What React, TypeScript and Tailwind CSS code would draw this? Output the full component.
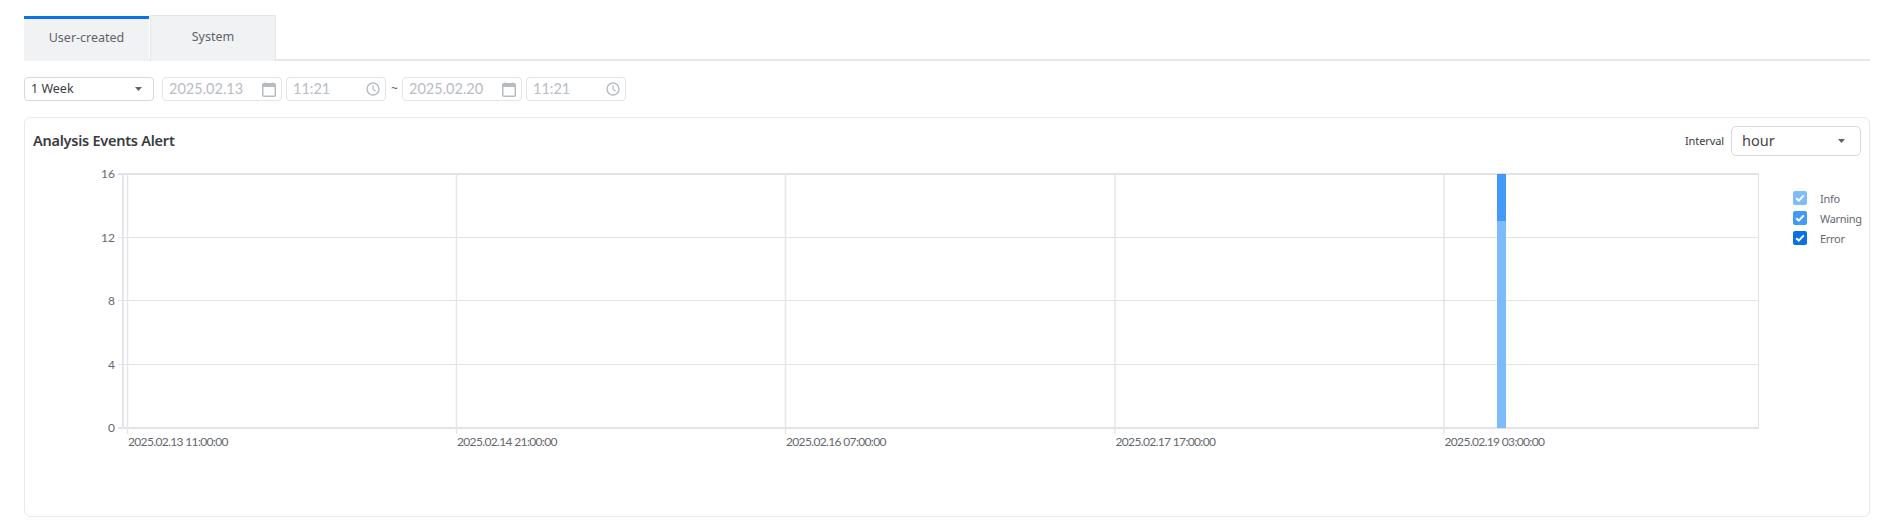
const sans = { fontFamily: '"Noto Sans", sans-serif' };

function Caret() {
  return (
    <svg width="7" height="4" viewBox="0 0 7 4" className="shrink-0">
      <path d="M0 0h7L3.5 4z" fill="#5f6268" />
    </svg>
  );
}

function CalendarIcon() {
  return (
    <svg width="14" height="15" viewBox="0 0 14 15" fill="none" className="shrink-0">
      <rect x="0.75" y="1.75" width="12.5" height="12.5" rx="1" stroke="#b7bbc2" strokeWidth="1.5" />
      <rect x="1" y="2" width="12" height="3" fill="#b7bbc2" />
      <path d="M3.5 0.5v2M10.5 0.5v2" stroke="#b7bbc2" strokeWidth="1.5" />
    </svg>
  );
}

function ClockIcon() {
  return (
    <svg width="14" height="14" viewBox="0 0 14 14" fill="none" className="shrink-0">
      <circle cx="7" cy="7" r="6" stroke="#b7bbc2" strokeWidth="1.4" />
      <path d="M7 3.2V7l2.6 2.2" stroke="#b7bbc2" strokeWidth="1.2" />
    </svg>
  );
}

function PickerField({ value, kind }: { value: string; kind: 'date' | 'time' }) {
  return (
    <div
      className={`flex h-[24px] items-center justify-between rounded-[4px] border border-[#e3e4e8] pl-[6px] pr-[5px] text-[14.5px] text-[#b9bcc3] ${
        kind === 'date' ? 'w-[120px]' : 'w-[100px]'
      }`}
      style={{ fontFamily: 'Lato, sans-serif' }}
    >
      <span>{value}</span>
      {kind === 'date' ? <CalendarIcon /> : <ClockIcon />}
    </div>
  );
}

function LegendItem({ label, color }: { label: string; color: string }) {
  return (
    <div className="flex h-[14px] items-center gap-[13px]">
      <span className={`flex h-[14px] w-[14px] items-center justify-center rounded-[2px] ${color}`}>
        <svg width="10" height="8" viewBox="0 0 10 8" fill="none">
          <path d="M1.2 4.2 3.8 6.6 8.8 1.4" stroke="#fff" strokeWidth="2" />
        </svg>
      </span>
      <span className="text-[11px] leading-none tracking-[-0.3px] text-[#66686e]">{label}</span>
    </div>
  );
}

const verticals = [127.5, 456.5, 785.5, 1115, 1444];
const horizontals = [
  { y: 174, label: '16' },
  { y: 237.5, label: '12' },
  { y: 300.5, label: '8' },
  { y: 364.5, label: '4' },
  { y: 428, label: '0' },
];
const xLabels = ['2025.02.13 11:00:00', '2025.02.14 21:00:00', '2025.02.16 07:00:00', '2025.02.17 17:00:00', '2025.02.19 03:00:00'];

function AlertChart() {
  // coordinates are the page's, the svg sits at the card's left/top offset
  return (
    <svg width="1740" height="290" viewBox="25 165 1740 290" className="block">
      {horizontals.map((h) => (
        <g key={h.label}>
          <line x1="118" x2="1759" y1={h.y} y2={h.y} stroke="#e2e2e7" strokeWidth={h.label === '16' || h.label === '0' ? 2 : 1} />
          <text x="115" y={h.y + 4} textAnchor="end" fontSize="12" fill="#66686e" fontFamily="Lato, sans-serif">
            {h.label}
          </text>
        </g>
      ))}
      <line x1="123" x2="123" y1="174" y2="429" stroke="#e4e4e9" strokeWidth="2" />
      <line x1="1758.5" x2="1758.5" y1="174" y2="429" stroke="#e2e2e6" strokeWidth="1" />
      {verticals.map((x, i) => (
        <g key={x}>
          <line x1={x} x2={x} y1="174" y2="434" stroke="#e6e6ea" strokeWidth="1.5" />
          <text x={x + 0.5} y="446" fontSize="12" letterSpacing="-0.65" fill="#66686e" fontFamily="Lato, sans-serif">
            {xLabels[i]}
          </text>
        </g>
      ))}
      <rect x="1497" y="221" width="9" height="207" fill="#7dbcfb" />
      <rect x="1497" y="174" width="9" height="47" fill="#4299f7" />
    </svg>
  );
}

export default function App() {
  return (
    <div className="h-[524px] bg-white pl-[24px] pr-[29px] pt-[15px]" style={sans}>
      {/* Tabs */}
      <div className="flex h-[46px] border-b-2 border-[#e6e7eb]">
        <div className="-mb-[2px] mt-px flex h-[45px] w-[125px] items-center justify-center border-t-[3px] border-[#0b73ea] bg-[#f1f2f4] pb-[3px] text-[12.5px] text-[#5f6268]">
          User-created
        </div>
        <div className="-mb-[2px] ml-px flex h-[46px] w-[126px] items-center justify-center border-l border-r border-t border-[#e6e7eb] bg-[#f1f2f4] pb-[2px] text-[12.5px] text-[#5f6268]">
          System
        </div>
      </div>

      {/* Period filter */}
      <div className="mt-[16px] flex items-center">
        <div className="flex h-[24px] w-[130px] items-center justify-between rounded-[4px] border border-[#d8d9de] pl-[6px] pr-[11px] text-[12.5px] text-[#3c3d42]">
          <span>1 Week</span>
          <Caret />
        </div>
        <div className="ml-[8px]"><PickerField value="2025.02.13" kind="date" /></div>
        <div className="ml-[4px]"><PickerField value="11:21" kind="time" /></div>
        <span className="ml-[5px] mr-[4px] w-[7px] text-[12px] text-[#5f6268]">~</span>
        <PickerField value="2025.02.20" kind="date" />
        <div className="ml-[4px]"><PickerField value="11:21" kind="time" /></div>
      </div>

      {/* Card */}
      <div className="mt-[16px] h-[400px] rounded-[6px] border border-[#e8e9ec]">
        <div className="flex h-[47px] items-start justify-between pl-[8px] pr-[8px] pt-[8px]">
          <h2 className="mt-[4px] text-[14.5px] font-semibold tracking-[-0.25px] text-[#3a3b40]">Analysis Events Alert</h2>
          <div className="flex items-center gap-[7px]">
            <span className="text-[11px] tracking-[-0.1px] text-[#3a3b40]">Interval</span>
            <div className="flex h-[30px] w-[130px] items-center justify-between rounded-[5px] border border-[#d8d9de] pl-[10px] pr-[15px] text-[14.5px] text-[#45464b]">
              <span>hour</span>
              <Caret />
            </div>
          </div>
        </div>
        <div className="relative">
          <AlertChart />
          <div className="absolute left-[1768px] top-[26px] flex flex-col gap-[6px]">
            <LegendItem label="Info" color="bg-[#7dbcfb]" />
            <LegendItem label="Warning" color="bg-[#4299f7]" />
            <LegendItem label="Error" color="bg-[#0b6fe8]" />
          </div>
        </div>
      </div>
    </div>
  );
}
